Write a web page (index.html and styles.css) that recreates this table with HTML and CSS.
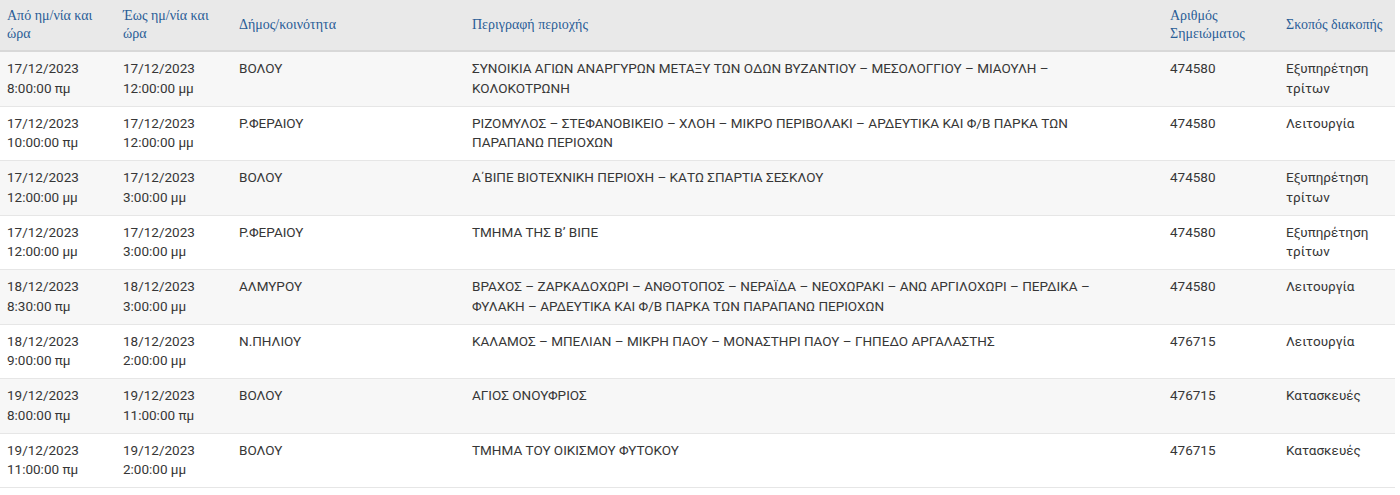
FILE: index.html
```html
<!DOCTYPE html>
<html lang="el">
<head>
<meta charset="utf-8">
<title>Διακοπές ρεύματος</title>
<link rel="stylesheet" href="styles.css">
</head>
<body>
<table class="outages">
  <colgroup>
    <col class="c-from"><col class="c-to"><col class="c-muni"><col class="c-desc"><col class="c-note"><col class="c-reason">
  </colgroup>
  <thead>
    <tr>
      <th>Από ημ/νία και ώρα</th>
      <th>Έως ημ/νία και ώρα</th>
      <th>Δήμος/κοινότητα</th>
      <th>Περιγραφή περιοχής</th>
      <th>Αριθμός Σημειώματος</th>
      <th>Σκοπός διακοπής</th>
    </tr>
  </thead>
  <tbody>
    <tr>
      <td>17/12/2023 8:00:00 πμ</td>
      <td>17/12/2023 12:00:00 μμ</td>
      <td>ΒΟΛΟΥ</td>
      <td class="desc">ΣΥΝΟΙΚΙΑ ΑΓΙΩΝ ΑΝΑΡΓΥΡΩΝ ΜΕΤΑΞΥ ΤΩΝ ΟΔΩΝ ΒΥΖΑΝΤΙΟΥ – ΜΕΣΟΛΟΓΓΙΟΥ – ΜΙΑΟΥΛΗ – ΚΟΛΟΚΟΤΡΩΝΗ</td>
      <td>474580</td>
      <td>Εξυπηρέτηση τρίτων</td>
    </tr>
    <tr>
      <td>17/12/2023 10:00:00 πμ</td>
      <td>17/12/2023 12:00:00 μμ</td>
      <td>Ρ.ΦΕΡΑΙΟΥ</td>
      <td class="desc">ΡΙΖΟΜΥΛΟΣ – ΣΤΕΦΑΝΟΒΙΚΕΙΟ – ΧΛΟΗ – ΜΙΚΡΟ ΠΕΡΙΒΟΛΑΚΙ – ΑΡΔΕΥΤΙΚΑ ΚΑΙ Φ/Β ΠΑΡΚΑ ΤΩΝ ΠΑΡΑΠΑΝΩ ΠΕΡΙΟΧΩΝ</td>
      <td>474580</td>
      <td>Λειτουργία</td>
    </tr>
    <tr>
      <td>17/12/2023 12:00:00 μμ</td>
      <td>17/12/2023 3:00:00 μμ</td>
      <td>ΒΟΛΟΥ</td>
      <td class="desc">Α΄ΒΙΠΕ ΒΙΟΤΕΧΝΙΚΗ ΠΕΡΙΟΧΗ – ΚΑΤΩ ΣΠΑΡΤΙΑ ΣΕΣΚΛΟΥ</td>
      <td>474580</td>
      <td>Εξυπηρέτηση τρίτων</td>
    </tr>
    <tr>
      <td>17/12/2023 12:00:00 μμ</td>
      <td>17/12/2023 3:00:00 μμ</td>
      <td>Ρ.ΦΕΡΑΙΟΥ</td>
      <td class="desc">ΤΜΗΜΑ ΤΗΣ Β’ ΒΙΠΕ</td>
      <td>474580</td>
      <td>Εξυπηρέτηση τρίτων</td>
    </tr>
    <tr>
      <td>18/12/2023 8:30:00 πμ</td>
      <td>18/12/2023 3:00:00 μμ</td>
      <td>ΑΛΜΥΡΟΥ</td>
      <td class="desc">ΒΡΑΧΟΣ – ΖΑΡΚΑΔΟΧΩΡΙ – ΑΝΘΟΤΟΠΟΣ – ΝΕΡΑΪΔΑ – ΝΕΟΧΩΡΑΚΙ – ΑΝΩ ΑΡΓΙΛΟΧΩΡΙ – ΠΕΡΔΙΚΑ – ΦΥΛΑΚΗ – ΑΡΔΕΥΤΙΚΑ ΚΑΙ Φ/Β ΠΑΡΚΑ ΤΩΝ ΠΑΡΑΠΑΝΩ ΠΕΡΙΟΧΩΝ</td>
      <td>474580</td>
      <td>Λειτουργία</td>
    </tr>
    <tr>
      <td>18/12/2023 9:00:00 πμ</td>
      <td>18/12/2023 2:00:00 μμ</td>
      <td>Ν.ΠΗΛΙΟΥ</td>
      <td class="desc">ΚΑΛΑΜΟΣ – ΜΠΕΛΙΑΝ – ΜΙΚΡΗ ΠΑΟΥ – ΜΟΝΑΣΤΗΡΙ ΠΑΟΥ – ΓΗΠΕΔΟ ΑΡΓΑΛΑΣΤΗΣ</td>
      <td>476715</td>
      <td>Λειτουργία</td>
    </tr>
    <tr>
      <td>19/12/2023 8:00:00 πμ</td>
      <td>19/12/2023 11:00:00 πμ</td>
      <td>ΒΟΛΟΥ</td>
      <td class="desc">ΑΓΙΟΣ ΟΝΟΥΦΡΙΟΣ</td>
      <td>476715</td>
      <td>Κατασκευές</td>
    </tr>
    <tr>
      <td>19/12/2023 11:00:00 πμ</td>
      <td>19/12/2023 2:00:00 μμ</td>
      <td>ΒΟΛΟΥ</td>
      <td class="desc">ΤΜΗΜΑ ΤΟΥ ΟΙΚΙΣΜΟΥ ΦΥΤΟΚΟΥ</td>
      <td>476715</td>
      <td>Κατασκευές</td>
    </tr>
  </tbody>
</table>
</body>
</html>
```

FILE: styles.css
```css
html, body {
  margin: 0;
  padding: 0;
  background: #ffffff;
}

.outages {
  width: 1395px;
  border-collapse: collapse;
  table-layout: fixed;
  font-family: Roboto, "Noto Sans", sans-serif;
  font-size: 13.5px;
  color: #363636;
}

.c-from, .c-to, .c-note, .c-reason { width: 116px; }
.c-muni { width: 233px; }
.c-desc { width: 698px; }

.outages th {
  font-family: "Liberation Serif", "DejaVu Serif", serif;
  font-weight: normal;
  font-size: 14px;
  line-height: 18px;
  color: #2a5d97;
  text-align: left;
  vertical-align: middle;
  background: #e9e9e9;
  padding: 6px 7px 6px 7px;
  height: 38px;
  border-bottom: 2px solid #d8d8d8;
}

.outages td {
  text-align: left;
  vertical-align: top;
  line-height: 19.5px;
  padding: 7px 7px 7.5px 7px;
  border-bottom: 1px solid #e6e6e6;
}

.outages td.desc {
  padding-right: 50px;
}

.outages tbody tr:nth-child(odd) td { background: #f7f7f7; }
.outages tbody tr:nth-child(even) td { background: #ffffff; }
```
